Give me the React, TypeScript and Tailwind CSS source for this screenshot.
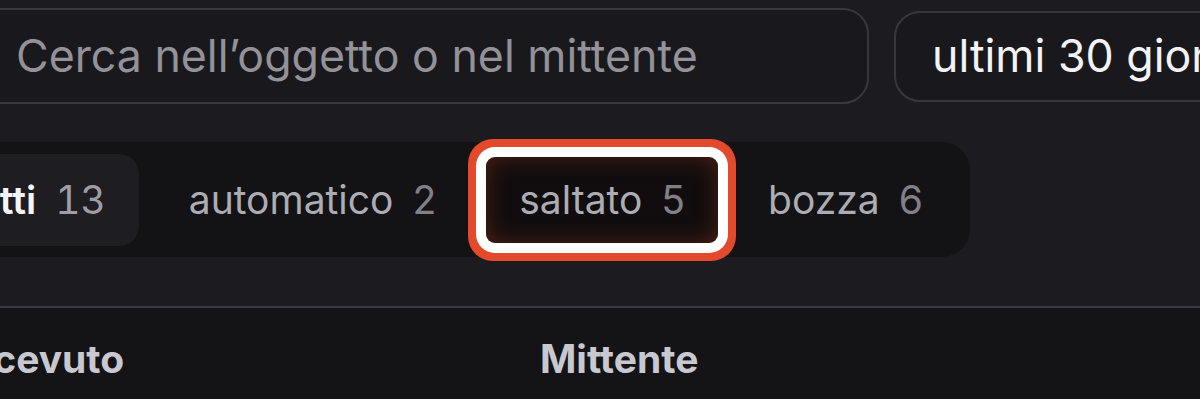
import React from "react";

const tabs = [
  { key: "tutti", label: "tutti", count: 13 },
  { key: "automatico", label: "automatico", count: 2 },
  { key: "saltato", label: "saltato", count: 5 },
  { key: "bozza", label: "bozza", count: 6 },
];

const IconSearch = (
  <svg className="w-[38px] h-[38px] shrink-0" fill="none" stroke="currentColor" viewBox="0 0 24 24" strokeWidth="2">
    <circle cx="11" cy="11" r="7" />
    <path d="M20 20l-3.5-3.5" />
  </svg>
);

export default function App() {
  const active = "tutti";
  const highlighted = "saltato";

  return (
    <div className="w-[1200px] h-[399px] overflow-hidden bg-[#1c1b20] font-['Inter',sans-serif]">
      <div className="-ml-[84px] w-[1500px] flex flex-col">
        {/* Filters */}
        <div className="flex items-center gap-[25px] pt-[8px]">
          <div className="w-[953px] h-[96px] flex items-center gap-[22px] pl-[38px] rounded-[26px] border-2 border-[#38373d] bg-[#19181d] text-[#7d7d84]">
            {IconSearch}
            <span className="text-[44.7px] text-[#929298] leading-none whitespace-nowrap">Cerca nell’oggetto o nel mittente</span>
          </div>
          <div className="w-[420px] h-[91px] flex items-center pl-[36px] rounded-[26px] border-2 border-[#38373d] bg-[#19181d]">
            <span className="text-[44.7px] text-[#f3f3f6] leading-none whitespace-nowrap">ultimi 30 giorni</span>
          </div>
        </div>

        {/* Status tabs */}
        <div className="mt-[38px] ml-[2px] self-start flex items-center gap-[17px] py-[11.5px] pl-[11px] pr-[14px] rounded-[28px] bg-[#131215]">
          {tabs.map(t => {
            const isActive = t.key === active;
            const isHl = t.key === highlighted;
            return (
              <div
                key={t.key}
                className={`flex items-center gap-[19px] px-[33px] text-[39px] leading-none ${
                  isActive
                    ? "h-[92px] rounded-[20px] bg-[#1e1d22]"
                    : isHl
                    ? "h-[86px] rounded-[9px] bg-[#110d0e] shadow-[inset_0_0_22px_rgba(160,55,30,0.45),0_0_0_10px_#ffffff,0_0_0_18px_#e3492b]"
                    : "h-[92px] rounded-[20px]"
                }`}
              >
                <span className={isActive ? "text-[#f5f5f7] font-semibold" : "text-[#acacb3]"}>{t.label}</span>
                <span className={isActive ? "tabular-nums text-[#9d9da3]" : "text-[#808087]"}>{t.count}</span>
              </div>
            );
          })}
        </div>

        {/* Table header */}
        <div className="mt-[49px] border-t-2 border-[#3a3a40] bg-[#141316] h-[120px] grid grid-cols-[583px_1fr] items-start pl-[41px] pt-[31px]">
          <span className="text-[39px] font-bold text-[#c8c8d0] leading-none">Ricevuto</span>
          <span className="text-[39px] font-bold text-[#c8c8d0] leading-none">Mittente</span>
        </div>
      </div>
    </div>
  );
}
